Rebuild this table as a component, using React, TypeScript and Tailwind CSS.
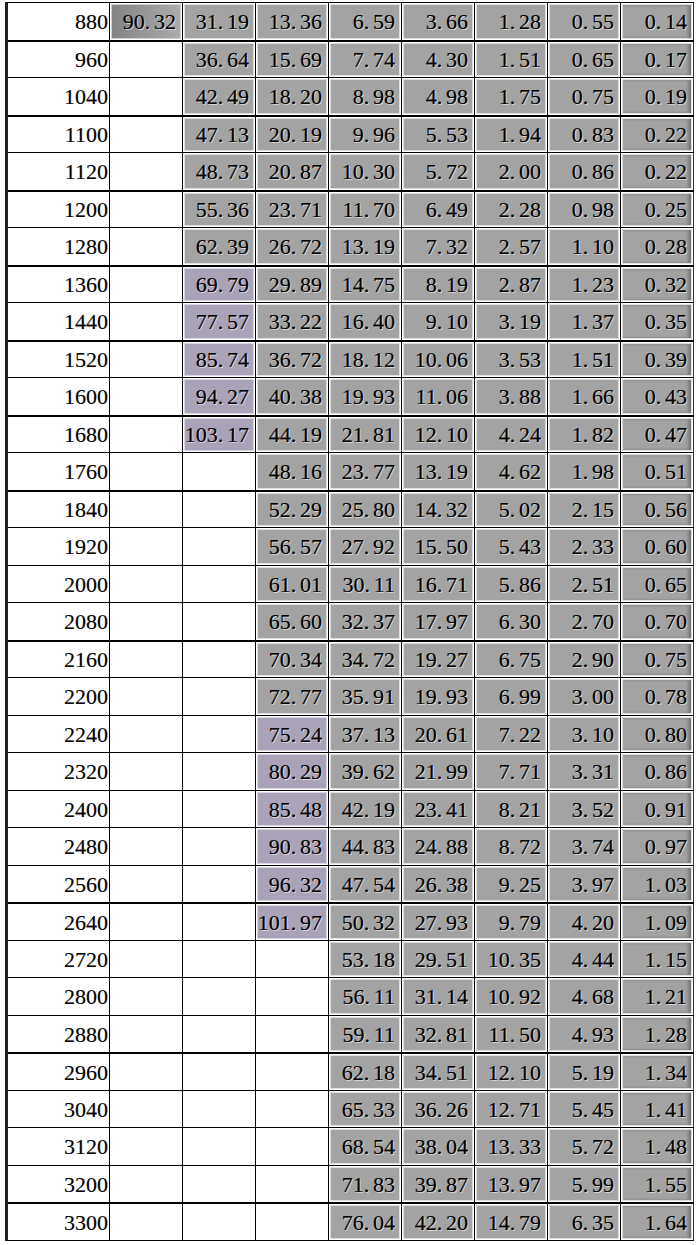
import React from 'react';

type Tone = 'g' | 'p' | 'd';

interface Cell {
  value: string;
  tone: Tone;
}

// "" = empty cell, "p:" = purple, "d:" = dark gray, plain = gray
const raw: [string, string[]][] = [
  ['880', ['d:90.32', '31.19', '13.36', '6.59', '3.66', '1.28', '0.55', '0.14']],
  ['960', ['', '36.64', '15.69', '7.74', '4.30', '1.51', '0.65', '0.17']],
  ['1040', ['', '42.49', '18.20', '8.98', '4.98', '1.75', '0.75', '0.19']],
  ['1100', ['', '47.13', '20.19', '9.96', '5.53', '1.94', '0.83', '0.22']],
  ['1120', ['', '48.73', '20.87', '10.30', '5.72', '2.00', '0.86', '0.22']],
  ['1200', ['', '55.36', '23.71', '11.70', '6.49', '2.28', '0.98', '0.25']],
  ['1280', ['', '62.39', '26.72', '13.19', '7.32', '2.57', '1.10', '0.28']],
  ['1360', ['', 'p:69.79', '29.89', '14.75', '8.19', '2.87', '1.23', '0.32']],
  ['1440', ['', 'p:77.57', '33.22', '16.40', '9.10', '3.19', '1.37', '0.35']],
  ['1520', ['', 'p:85.74', '36.72', '18.12', '10.06', '3.53', '1.51', '0.39']],
  ['1600', ['', 'p:94.27', '40.38', '19.93', '11.06', '3.88', '1.66', '0.43']],
  ['1680', ['', 'p:103.17', '44.19', '21.81', '12.10', '4.24', '1.82', '0.47']],
  ['1760', ['', '', '48.16', '23.77', '13.19', '4.62', '1.98', '0.51']],
  ['1840', ['', '', '52.29', '25.80', '14.32', '5.02', '2.15', '0.56']],
  ['1920', ['', '', '56.57', '27.92', '15.50', '5.43', '2.33', '0.60']],
  ['2000', ['', '', '61.01', '30.11', '16.71', '5.86', '2.51', '0.65']],
  ['2080', ['', '', '65.60', '32.37', '17.97', '6.30', '2.70', '0.70']],
  ['2160', ['', '', '70.34', '34.72', '19.27', '6.75', '2.90', '0.75']],
  ['2200', ['', '', '72.77', '35.91', '19.93', '6.99', '3.00', '0.78']],
  ['2240', ['', '', 'p:75.24', '37.13', '20.61', '7.22', '3.10', '0.80']],
  ['2320', ['', '', 'p:80.29', '39.62', '21.99', '7.71', '3.31', '0.86']],
  ['2400', ['', '', 'p:85.48', '42.19', '23.41', '8.21', '3.52', '0.91']],
  ['2480', ['', '', 'p:90.83', '44.83', '24.88', '8.72', '3.74', '0.97']],
  ['2560', ['', '', 'p:96.32', '47.54', '26.38', '9.25', '3.97', '1.03']],
  ['2640', ['', '', 'p:101.97', '50.32', '27.93', '9.79', '4.20', '1.09']],
  ['2720', ['', '', '', '53.18', '29.51', '10.35', '4.44', '1.15']],
  ['2800', ['', '', '', '56.11', '31.14', '10.92', '4.68', '1.21']],
  ['2880', ['', '', '', '59.11', '32.81', '11.50', '4.93', '1.28']],
  ['2960', ['', '', '', '62.18', '34.51', '12.10', '5.19', '1.34']],
  ['3040', ['', '', '', '65.33', '36.26', '12.71', '5.45', '1.41']],
  ['3120', ['', '', '', '68.54', '38.04', '13.33', '5.72', '1.48']],
  ['3200', ['', '', '', '71.83', '39.87', '13.97', '5.99', '1.55']],
  ['3300', ['', '', '', '76.04', '42.20', '14.79', '6.35', '1.64']],
];

// rows whose top rule is drawn heavy
const thickTop = new Set([1, 3, 5, 7, 9, 11, 13, 17, 24, 28, 32]);

const parse = (s: string): Cell | null => {
  if (!s) return null;
  if (s.startsWith('p:')) return { value: s.slice(2), tone: 'p' };
  if (s.startsWith('d:')) return { value: s.slice(2), tone: 'd' };
  return { value: s, tone: 'g' };
};

const Num: React.FC<{ value: string }> = ({ value }) => {
  const [int, dec] = value.split('.');
  if (dec === undefined) return <span>{value}</span>;
  return (
    <span className="whitespace-nowrap">
      {int}
      <span className="inline-block w-[0.42em]">.</span>
      {dec}
    </span>
  );
};

const toneClass: Record<Tone, string> = {
  g: 'bg-[#a3a3a3] border-[#dedede]',
  p: 'bg-[#aaa3b8] border-[#d9d4e2]',
  d: 'bg-linear-to-r from-[#838383] to-[#acacac] border-[#d0d0d0]',
};

const ValueCell: React.FC<{ cell: Cell | null; last: boolean }> = ({ cell, last }) => (
  <div className={`w-[73px] shrink-0 border-r border-black p-px ${last ? 'border-r-[#333]' : ''}`}>
    {cell && (
      <div
        className={`h-full border flex items-center justify-end pr-[4px] pt-[2px] ${toneClass[cell.tone]} ${
          last ? 'shadow-[inset_-3px_0_3px_rgba(0,0,0,0.25)]' : ''
        }`}
      >
        <Num value={cell.value} />
      </div>
    )}
  </div>
);

export default function App() {
  return (
    <div className="w-[700px] h-[1245px] bg-white pt-[2px] overflow-hidden">
      <div
        className="ml-[5px] w-[689px] border-l-[3px] border-[#1f1f1f] border-b border-b-black text-[22px] leading-none text-black [-webkit-text-stroke:0.15px_#000] [text-shadow:1px_1px_0_rgba(255,255,255,0.55)]"
        style={{ fontFamily: '"Liberation Serif", "Times New Roman", serif' }}
      >
        {raw.map(([label, vals], i) => (
          <div
            key={label}
            className={`flex h-[37.5px] ${thickTop.has(i) ? 'border-t-2' : 'border-t'} border-black`}
          >
            <div className="w-[102px] shrink-0 border-r border-black flex items-center justify-end pr-[1px] pt-[2px]">
              {label}
            </div>
            {vals.map((v, j) => (
              <ValueCell key={j} cell={parse(v)} last={j === vals.length - 1} />
            ))}
          </div>
        ))}
      </div>
    </div>
  );
}
